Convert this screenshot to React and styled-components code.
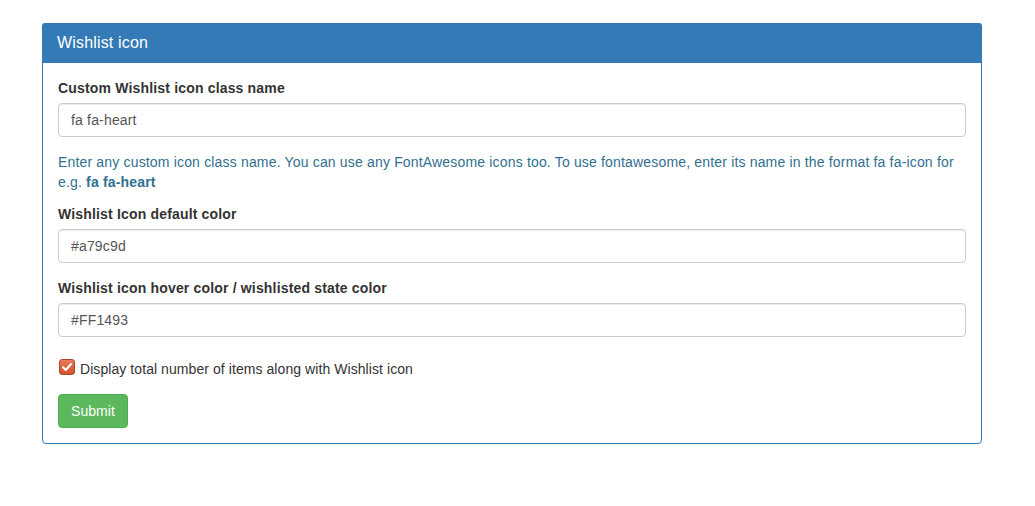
import React from 'react';
import styled, { createGlobalStyle } from 'styled-components';

const GlobalStyle = createGlobalStyle`
  * { box-sizing: border-box; }
  body {
    margin: 0;
    background: #ffffff;
    font-family: "Liberation Sans", Arial, sans-serif;
    font-size: 14px;
    line-height: 20px;
    letter-spacing: 0.17px;
    color: #333333;
  }
`;

const Page = styled.div`
  padding: 23px 0 0 42px;
`;

const Panel = styled.section`
  width: 940px;
  border: 1px solid #337ab7;
  border-radius: 4px;
  background: #ffffff;
  box-shadow: 0 1px 1px rgba(0, 0, 0, 0.05);
`;

const PanelHeading = styled.div`
  background: #337ab7;
  color: #ffffff;
  padding: 10px 15px;
  border-bottom: 1px solid #337ab7;
  border-radius: 3px 3px 0 0;
  font-size: 16px;
  line-height: 19px;
  margin: -1px -1px 0;
`;

const PanelBody = styled.form`
  padding: 15px;
  display: flex;
  flex-direction: column;
`;

const FormGroup = styled.div`
  display: flex;
  flex-direction: column;
  margin-bottom: ${props => props.$gap || 15}px;
`;

const Label = styled.label`
  font-weight: bold;
  margin-bottom: 5px;
`;

const Input = styled.input`
  height: 34px;
  width: 100%;
  padding: 6px 12px;
  font-family: inherit;
  font-size: 14px;
  letter-spacing: inherit;
  color: #555555;
  border: 1px solid #cccccc;
  border-radius: 4px;
  box-shadow: inset 0 1px 1px rgba(0, 0, 0, 0.075);
  outline: none;
`;

const HelpText = styled.p`
  margin: 0 0 12px;
  color: #31708f;
`;

const CheckRow = styled.label`
  display: flex;
  align-items: center;
  gap: 5px;
  margin: 7px 0 15px 1px;
  color: #333333;
  letter-spacing: 0.07px;
`;

const CheckBox = styled.span`
  width: 16px;
  height: 16px;
  margin-top: -4px;
  border-radius: 3px;
  border: 1px solid #a9482a;
  background: linear-gradient(#e8795a, #d2532e);
  display: inline-flex;
  align-items: center;
  justify-content: center;
`;

const Button = styled.button`
  align-self: flex-start;
  height: 34px;
  padding: 6px 12px;
  font-family: inherit;
  font-size: 14px;
  line-height: 20px;
  letter-spacing: 0.05px;
  color: #ffffff;
  background: #5cb85c;
  border: 1px solid #4cae4c;
  border-radius: 4px;
`;

const App = () => (
  <>
    <GlobalStyle />
    <Page>
      <Panel>
        <PanelHeading>Wishlist icon</PanelHeading>
        <PanelBody onSubmit={e => e.preventDefault()}>
          <FormGroup>
            <Label>Custom Wishlist icon class name</Label>
            <Input defaultValue="fa fa-heart" />
          </FormGroup>
          <HelpText>
            Enter any custom icon class name. You can use any FontAwesome icons too. To use fontawesome, enter its name in the format fa fa-icon for e.g. <b>fa fa-heart</b>
          </HelpText>
          <FormGroup>
            <Label>Wishlist Icon default color</Label>
            <Input defaultValue="#a79c9d" />
          </FormGroup>
          <FormGroup $gap={0}>
            <Label>Wishlist icon hover color / wishlisted state color</Label>
            <Input defaultValue="#FF1493" />
          </FormGroup>
          <CheckRow>
            <CheckBox>
              <svg width="12" height="12" viewBox="0 0 12 12">
                <path d="M2 6.2 L4.8 9 L10 3" fill="none" stroke="#ffffff" strokeWidth="2" strokeLinecap="round" strokeLinejoin="round" />
              </svg>
            </CheckBox>
            Display total number of items along with Wishlist icon
          </CheckRow>
          <Button type="submit">Submit</Button>
        </PanelBody>
      </Panel>
    </Page>
  </>
);

export default App;
